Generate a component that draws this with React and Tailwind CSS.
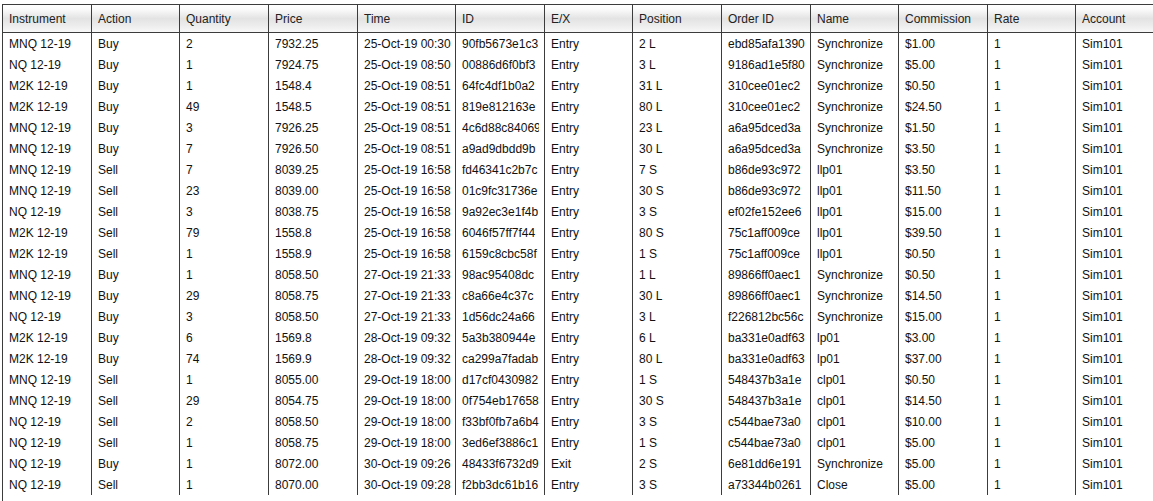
import React from 'react';

const columns = [
  { key: 'instrument', label: 'Instrument', width: 'w-[89px]' },
  { key: 'action', label: 'Action', width: 'w-[88px]' },
  { key: 'quantity', label: 'Quantity', width: 'w-[89px]' },
  { key: 'price', label: 'Price', width: 'w-[89px]' },
  { key: 'time', label: 'Time', width: 'w-[98px]' },
  { key: 'id', label: 'ID', width: 'w-[89px]', clip: true },
  { key: 'ex', label: 'E/X', width: 'w-[88px]' },
  { key: 'position', label: 'Position', width: 'w-[89px]' },
  { key: 'orderId', label: 'Order ID', width: 'w-[89px]', clip: true },
  { key: 'name', label: 'Name', width: 'w-[88px]' },
  { key: 'commission', label: 'Commission', width: 'w-[89px]' },
  { key: 'rate', label: 'Rate', width: 'w-[88px]' },
  { key: 'account', label: 'Account', width: 'w-[120px]' },
];

const row = (instrument, action, quantity, price, time, id, ex, position, orderId, name, commission) => ({
  instrument, action, quantity, price, time, id, ex, position, orderId, name, commission, rate: '1', account: 'Sim101',
});

// ids are cut by the column, as in the grid
const executions = [
  row('MNQ 12-19', 'Buy', '2', '7932.25', '25-Oct-19 00:30', '90fb5673e1c3', 'Entry', '2 L', 'ebd85afa1390', 'Synchronize', '$1.00'),
  row('NQ 12-19', 'Buy', '1', '7924.75', '25-Oct-19 08:50', '00886d6f0bf3', 'Entry', '3 L', '9186ad1e5f80', 'Synchronize', '$5.00'),
  row('M2K 12-19', 'Buy', '1', '1548.4', '25-Oct-19 08:51', '64fc4df1b0a2', 'Entry', '31 L', '310cee01ec2', 'Synchronize', '$0.50'),
  row('M2K 12-19', 'Buy', '49', '1548.5', '25-Oct-19 08:51', '819e812163e', 'Entry', '80 L', '310cee01ec2', 'Synchronize', '$24.50'),
  row('MNQ 12-19', 'Buy', '3', '7926.25', '25-Oct-19 08:51', '4c6d88c84069', 'Entry', '23 L', 'a6a95dced3a', 'Synchronize', '$1.50'),
  row('MNQ 12-19', 'Buy', '7', '7926.50', '25-Oct-19 08:51', 'a9ad9dbdd9b', 'Entry', '30 L', 'a6a95dced3a', 'Synchronize', '$3.50'),
  row('MNQ 12-19', 'Sell', '7', '8039.25', '25-Oct-19 16:58', 'fd46341c2b7c', 'Entry', '7 S', 'b86de93c972', 'llp01', '$3.50'),
  row('MNQ 12-19', 'Sell', '23', '8039.00', '25-Oct-19 16:58', '01c9fc31736e', 'Entry', '30 S', 'b86de93c972', 'llp01', '$11.50'),
  row('NQ 12-19', 'Sell', '3', '8038.75', '25-Oct-19 16:58', '9a92ec3e1f4b', 'Entry', '3 S', 'ef02fe152ee6', 'llp01', '$15.00'),
  row('M2K 12-19', 'Sell', '79', '1558.8', '25-Oct-19 16:58', '6046f57ff7f44', 'Entry', '80 S', '75c1aff009ce', 'llp01', '$39.50'),
  row('M2K 12-19', 'Sell', '1', '1558.9', '25-Oct-19 16:58', '6159c8cbc58f', 'Entry', '1 S', '75c1aff009ce', 'llp01', '$0.50'),
  row('MNQ 12-19', 'Buy', '1', '8058.50', '27-Oct-19 21:33', '98ac95408dc', 'Entry', '1 L', '89866ff0aec1', 'Synchronize', '$0.50'),
  row('MNQ 12-19', 'Buy', '29', '8058.75', '27-Oct-19 21:33', 'c8a66e4c37c', 'Entry', '30 L', '89866ff0aec1', 'Synchronize', '$14.50'),
  row('NQ 12-19', 'Buy', '3', '8058.50', '27-Oct-19 21:33', '1d56dc24a66', 'Entry', '3 L', 'f226812bc56c', 'Synchronize', '$15.00'),
  row('M2K 12-19', 'Buy', '6', '1569.8', '28-Oct-19 09:32', '5a3b380944e', 'Entry', '6 L', 'ba331e0adf63', 'lp01', '$3.00'),
  row('M2K 12-19', 'Buy', '74', '1569.9', '28-Oct-19 09:32', 'ca299a7fadab', 'Entry', '80 L', 'ba331e0adf63', 'lp01', '$37.00'),
  row('MNQ 12-19', 'Sell', '1', '8055.00', '29-Oct-19 18:00', 'd17cf0430982', 'Entry', '1 S', '548437b3a1e', 'clp01', '$0.50'),
  row('MNQ 12-19', 'Sell', '29', '8054.75', '29-Oct-19 18:00', '0f754eb17658', 'Entry', '30 S', '548437b3a1e', 'clp01', '$14.50'),
  row('NQ 12-19', 'Sell', '2', '8058.50', '29-Oct-19 18:00', 'f33bf0fb7a6b4', 'Entry', '3 S', 'c544bae73a0', 'clp01', '$10.00'),
  row('NQ 12-19', 'Sell', '1', '8058.75', '29-Oct-19 18:00', '3ed6ef3886c1', 'Entry', '1 S', 'c544bae73a0', 'clp01', '$5.00'),
  row('NQ 12-19', 'Buy', '1', '8072.00', '30-Oct-19 09:26', '48433f6732d9', 'Exit', '2 S', '6e81dd6e191', 'Synchronize', '$5.00'),
  row('NQ 12-19', 'Sell', '1', '8070.00', '30-Oct-19 09:28', 'f2bb3dc61b16', 'Entry', '3 S', 'a73344b0261', 'Close', '$5.00'),
];

const App = () => {
  return (
    <div className="w-[1153px] h-[501px] overflow-hidden bg-white pt-[4px] pl-[2px] font-['Liberation_Sans',Arial,sans-serif] text-[12px]">
      <div className="h-[497px] border-l border-t border-[#3c3c3c] w-[1200px]">
        {/* Header */}
        <div className="flex h-[28px] border-b border-[#3c3c3c] bg-[linear-gradient(to_bottom,#ffffff_0%,#fbfbfb_15%,#e3e3e3_50%,#ececec_75%,#f8f8f8_100%)]">
          {columns.map((col) => (
            <div
              key={col.key}
              className={`${col.width} shrink-0 border-r border-[#3c3c3c] pl-[6px] flex items-center text-[#222] whitespace-nowrap`}
            >
              {col.label}
            </div>
          ))}
        </div>

        {/* Rows */}
        {executions.map((ex, i) => (
          <div key={i} className="flex h-[21px]">
            {columns.map((col) =>
              col.clip ? (
                <div
                  key={col.key}
                  className={`${col.width} shrink-0 border-r border-[#3c3c3c] pl-[6px] pr-[5px] flex items-center text-[#111]`}
                >
                  <span className="block min-w-0 flex-1 overflow-hidden whitespace-nowrap">{ex[col.key]}</span>
                </div>
              ) : (
                <div
                  key={col.key}
                  className={`${col.width} shrink-0 border-r border-[#3c3c3c] pl-[6px] flex items-center text-[#111] whitespace-nowrap`}
                >
                  {ex[col.key]}
                </div>
              )
            )}
          </div>
        ))}
      </div>
    </div>
  );
};

export default App;
